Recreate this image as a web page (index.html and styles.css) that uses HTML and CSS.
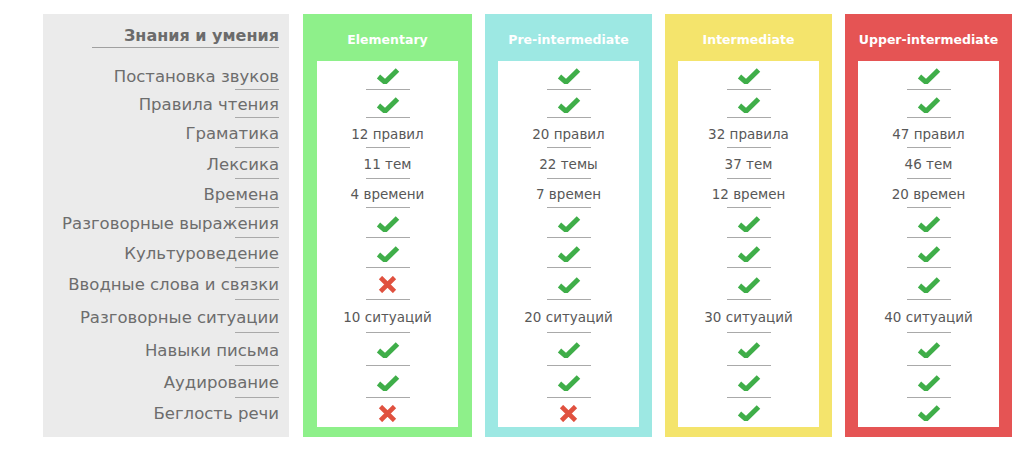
FILE: index.html
```html
<!DOCTYPE html>
<html lang="ru">
<head>
<meta charset="utf-8">
<title>Знания и умения</title>
<link rel="stylesheet" href="styles.css">
</head>
<body>
<svg width="0" height="0" class="defs">
  <defs>
    <symbol id="ok" viewBox="0 0 24 16">
      <path d="M2.5 8.5 L9 14.2 L21.5 2" fill="none" stroke="#3fae49" stroke-width="5" stroke-linejoin="miter" stroke-linecap="butt"/>
    </symbol>
    <symbol id="no" viewBox="0 0 19 17">
      <path d="M2.5 1.5 L16.5 15.5 M16.5 1.5 L2.5 15.5" fill="none" stroke="#e0513f" stroke-width="4.6" stroke-linecap="butt"/>
    </symbol>
  </defs>
</svg>
<div class="table">
  <div class="skills">
    <div class="skills-head"><span>Знания и умения</span></div>
    <ul class="rows">
      <li>Постановка звуков</li>
      <li>Правила чтения</li>
      <li>Граматика</li>
      <li>Лексика</li>
      <li>Времена</li>
      <li>Разговорные выражения</li>
      <li>Культуроведение</li>
      <li>Вводные слова и связки</li>
      <li>Разговорные ситуации</li>
      <li>Навыки письма</li>
      <li>Аудирование</li>
      <li>Беглость речи</li>
    </ul>
  </div>

  <div class="level level-el">
    <div class="level-head">Elementary</div>
    <ul class="rows cells">
      <li><svg class="ok"><use href="#ok"/></svg></li>
      <li><svg class="ok"><use href="#ok"/></svg></li>
      <li>12 правил</li>
      <li>11 тем</li>
      <li>4 времени</li>
      <li><svg class="ok"><use href="#ok"/></svg></li>
      <li><svg class="ok"><use href="#ok"/></svg></li>
      <li><svg class="no"><use href="#no"/></svg></li>
      <li>10 ситуаций</li>
      <li><svg class="ok"><use href="#ok"/></svg></li>
      <li><svg class="ok"><use href="#ok"/></svg></li>
      <li><svg class="no"><use href="#no"/></svg></li>
    </ul>
  </div>

  <div class="level level-pre">
    <div class="level-head">Pre-intermediate</div>
    <ul class="rows cells">
      <li><svg class="ok"><use href="#ok"/></svg></li>
      <li><svg class="ok"><use href="#ok"/></svg></li>
      <li>20 правил</li>
      <li>22 темы</li>
      <li>7 времен</li>
      <li><svg class="ok"><use href="#ok"/></svg></li>
      <li><svg class="ok"><use href="#ok"/></svg></li>
      <li><svg class="ok"><use href="#ok"/></svg></li>
      <li>20 ситуаций</li>
      <li><svg class="ok"><use href="#ok"/></svg></li>
      <li><svg class="ok"><use href="#ok"/></svg></li>
      <li><svg class="no"><use href="#no"/></svg></li>
    </ul>
  </div>

  <div class="level level-int">
    <div class="level-head">Intermediate</div>
    <ul class="rows cells">
      <li><svg class="ok"><use href="#ok"/></svg></li>
      <li><svg class="ok"><use href="#ok"/></svg></li>
      <li>32 правила</li>
      <li>37 тем</li>
      <li>12 времен</li>
      <li><svg class="ok"><use href="#ok"/></svg></li>
      <li><svg class="ok"><use href="#ok"/></svg></li>
      <li><svg class="ok"><use href="#ok"/></svg></li>
      <li>30 ситуаций</li>
      <li><svg class="ok"><use href="#ok"/></svg></li>
      <li><svg class="ok"><use href="#ok"/></svg></li>
      <li><svg class="ok"><use href="#ok"/></svg></li>
    </ul>
  </div>

  <div class="level level-up">
    <div class="level-head">Upper-intermediate</div>
    <ul class="rows cells">
      <li><svg class="ok"><use href="#ok"/></svg></li>
      <li><svg class="ok"><use href="#ok"/></svg></li>
      <li>47 правил</li>
      <li>46 тем</li>
      <li>20 времен</li>
      <li><svg class="ok"><use href="#ok"/></svg></li>
      <li><svg class="ok"><use href="#ok"/></svg></li>
      <li><svg class="ok"><use href="#ok"/></svg></li>
      <li>40 ситуаций</li>
      <li><svg class="ok"><use href="#ok"/></svg></li>
      <li><svg class="ok"><use href="#ok"/></svg></li>
      <li><svg class="ok"><use href="#ok"/></svg></li>
    </ul>
  </div>
</div>
</body>
</html>
```

FILE: styles.css
```css
* { box-sizing: border-box; }

html, body {
  margin: 0;
  padding: 0;
  background: #ffffff;
}

body {
  font-family: "DejaVu Sans", Verdana, sans-serif;
  color: #666;
}

.defs {
  display: block;
  width: 0;
  height: 0;
  overflow: hidden;
}

.table {
  display: flex;
  gap: 13px;
  padding: 14px 0 0 43px;
  align-items: stretch;
}

/* ---------- left column ---------- */
.skills {
  width: 246px;
  margin-right: 1px;
  background: #ebebeb;
  padding-bottom: 10px;
}

.skills-head {
  height: 47px;
  padding: 0 10px 13px 0;
  display: flex;
  justify-content: flex-end;
  align-items: flex-end;
}

.skills-head span {
  width: 187px;
  text-align: right;
  font-size: 16px;
  font-weight: bold;
  color: #6b6b6b;
  line-height: 20px;
  padding-bottom: 1px;
  border-bottom: 1px solid #a0a0a0;
}

.rows {
  list-style: none;
  margin: 0;
  padding: 0;
  display: grid;
  grid-template-rows: 29px 28px 30px 31px 29px 30px 30px 32px 33px 33px 32px 29px;
}

.rows li {
  display: flex;
  align-items: center;
  background: linear-gradient(#a9a9a9, #a9a9a9) right bottom / 44px 1px no-repeat;
}

.rows li:last-child {
  background: none;
}

.skills .rows li {
  justify-content: flex-end;
  padding-right: 10px;
  background-position: right 10px bottom;
  font-size: 16.5px;
  color: #6d6d6d;
  padding-top: 1px;
}

/* ---------- level columns ---------- */
.level {
  width: 167px;
  padding: 0 13px 10px;
}

.level-el { width: 169px; background: #8ef08a; padding: 0 14px 10px; }
.level-pre { background: #9de8e3; }
.level-int { background: #f4e46c; }
.level-up { background: #e55454; }

.level-head {
  height: 47px;
  display: flex;
  align-items: center;
  justify-content: center;
  padding-top: 4px;
  color: #ffffff;
  font-size: 12.5px;
  font-weight: bold;
  white-space: nowrap;
}

.cells {
  background-color: #ffffff;
}

.cells li {
  justify-content: center;
  background-position: center bottom;
  font-size: 13.5px;
  color: #585858;
  padding-top: 1px;
}

.cells li:last-child {
  background: none;
}

.ok {
  width: 24px;
  height: 16px;
  display: block;
}

.no {
  width: 19px;
  height: 17px;
  display: block;
}
```
